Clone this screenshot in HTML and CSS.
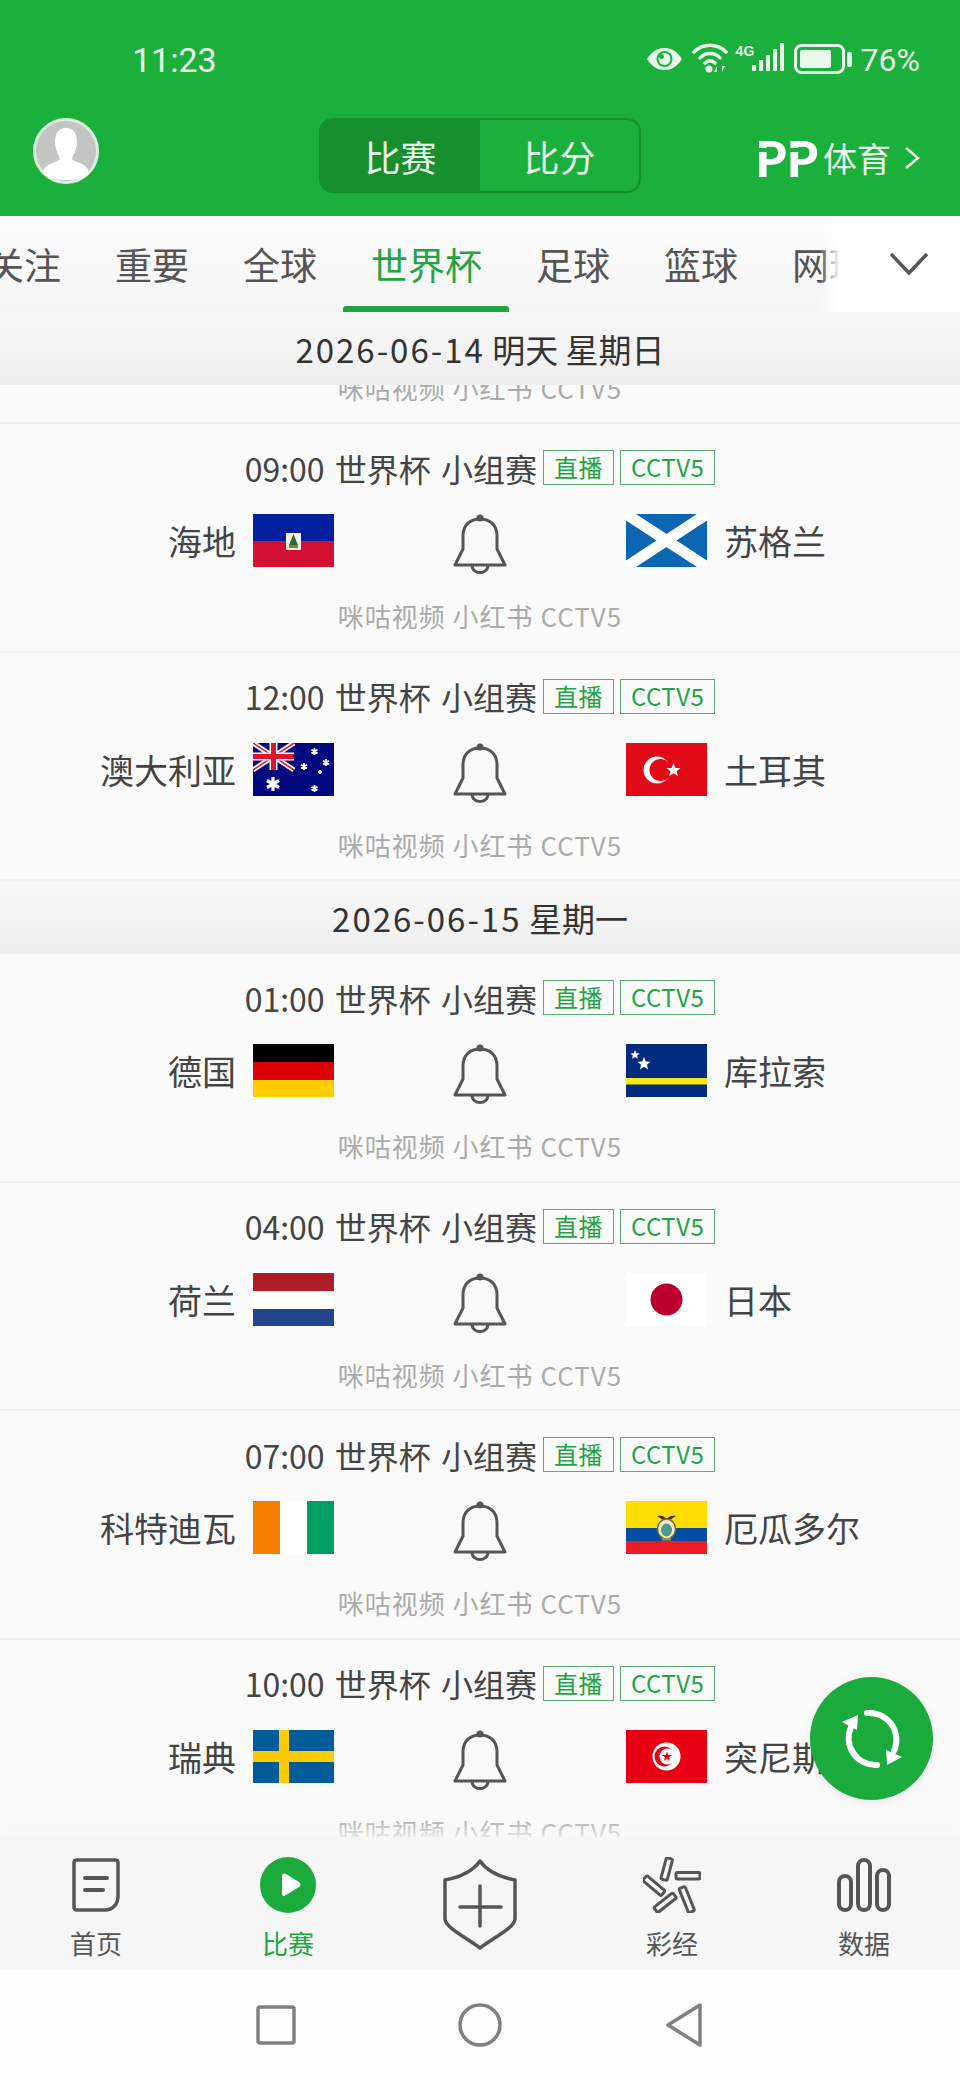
FILE: index.html
```html
<!DOCTYPE html>
<html>
	<head>
		<title>PP体育 比赛</title>
		<link rel="stylesheet" href="styles.css">
	</head>
	<body>
		<!-- shared flags and bell -->
		<svg class="defs" width="0" height="0">
			<symbol id="bell" viewBox="0 0 54 60">
				<circle cx="27" cy="4" r="3.5" fill="#555"/>
				<path d="M2 51 L10 35 V22 C10 11 17 5 27 5 C37 5 44 11 44 22 V35 L52 51 Z" fill="none" stroke="#555" stroke-width="3" stroke-linejoin="round"/>
				<path d="M19 51 C19 61 35 61 35 51" fill="none" stroke="#555" stroke-width="3"/>
			</symbol>
			<symbol id="haiti" viewBox="0 0 81 53" preserveAspectRatio="none">
				<rect width="81" height="27" fill="#00209f"/>
				<rect y="27" width="81" height="26" fill="#d21034"/>
				<rect x="33" y="19" width="15" height="17" fill="#f4f1e8"/>
				<path d="M40.500 20 L45 31 H36 Z" fill="#2f6b3a"/>
				<rect x="36" y="31" width="9" height="3" fill="#a8742a"/>
			</symbol>
			<symbol id="scotland" viewBox="0 0 81 53" preserveAspectRatio="none">
				<rect width="81" height="53" fill="#0b66b4"/>
				<path d="M0 0 L81 53 M81 0 L0 53" stroke="#fff" stroke-width="11"/>
			</symbol>
			<symbol id="australia" viewBox="0 0 81 53" preserveAspectRatio="none">
				<rect width="81" height="53" fill="#00087e"/>
				<path d="M0 0 L41 27 M41 0 L0 27" stroke="#fff" stroke-width="5"/>
				<path d="M0 0 L41 27 M41 0 L0 27" stroke="#e01a2b" stroke-width="1.600"/>
				<path d="M20.500 0 V27 M0 13.500 H41" stroke="#fff" stroke-width="8"/>
				<path d="M20.500 0 V27 M0 13.500 H41" stroke="#e8112d" stroke-width="5"/>
				<g stroke="#fff" fill="none">
					<path d="M20 34 V48 M14 37.500 L26 44.500 M26 37.500 L14 44.500" stroke-width="3.200"/>
					<path d="M61.500 5 V12 M58.500 6.700 L64.500 10.300 M64.500 6.700 L58.500 10.300" stroke-width="1.800"/>
					<path d="M73 16 V23 M70 17.700 L76 21.300 M76 17.700 L70 21.300" stroke-width="1.800"/>
					<path d="M51 20 V27 M48 21.700 L54 25.300 M54 21.700 L48 25.300" stroke-width="1.800"/>
					<path d="M67 27 V31 M65 29 H69" stroke-width="1.400"/>
					<path d="M61.500 42 V49 M58.500 43.700 L64.500 47.300 M64.500 43.700 L58.500 47.300" stroke-width="1.800"/>
				</g>
			</symbol>
			<symbol id="turkey" viewBox="0 0 81 53" preserveAspectRatio="none">
				<rect width="81" height="53" fill="#e30a17"/>
				<circle cx="31" cy="27" r="13.500" fill="#fff"/>
				<circle cx="34.500" cy="27" r="11" fill="#e30a17"/>
				<polygon points="46,20 47.900,24.900 53,25 49,28.200 50.400,33.100 46,30.300 41.600,33.100 43,28.200 39,25 44.100,24.900" fill="#fff" transform="translate(1.500 0)"/>
			</symbol>
			<symbol id="germany" viewBox="0 0 81 53" preserveAspectRatio="none">
				<rect width="81" height="18" fill="#000"/>
				<rect y="18" width="81" height="18" fill="#dd0000"/>
				<rect y="36" width="81" height="17" fill="#ffce00"/>
			</symbol>
			<symbol id="curacao" viewBox="0 0 81 53" preserveAspectRatio="none">
				<rect width="81" height="53" fill="#002b7f"/>
				<rect y="34" width="81" height="6.500" fill="#f9e814"/>
				<polygon points="9,6 10.300,9.200 13.700,9.400 11.100,11.500 12,14.800 9,13 6,14.800 6.900,11.500 4.300,9.400 7.700,9.200" fill="#fff"/>
				<polygon points="18,13 19.800,17.500 24.600,17.800 20.900,20.800 22.100,25.400 18,22.800 13.900,25.400 15.100,20.800 11.400,17.800 16.200,17.500" fill="#fff"/>
			</symbol>
			<symbol id="netherlands" viewBox="0 0 81 53" preserveAspectRatio="none">
				<rect width="81" height="18" fill="#ae1c28"/>
				<rect y="18" width="81" height="18" fill="#fff"/>
				<rect y="36" width="81" height="17" fill="#21468b"/>
			</symbol>
			<symbol id="japan" viewBox="0 0 81 53" preserveAspectRatio="none">
				<rect width="81" height="53" fill="#fff"/>
				<circle cx="40.500" cy="26.500" r="16" fill="#bc002d"/>
			</symbol>
			<symbol id="ivory" viewBox="0 0 81 53" preserveAspectRatio="none">
				<rect width="27" height="53" fill="#f77f00"/>
				<rect x="27" width="27" height="53" fill="#fff"/>
				<rect x="54" width="27" height="53" fill="#009e60"/>
			</symbol>
			<symbol id="ecuador" viewBox="0 0 81 53" preserveAspectRatio="none">
				<rect width="81" height="27" fill="#ffdd00"/>
				<rect y="27" width="81" height="13" fill="#034ea2"/>
				<rect y="40" width="81" height="13" fill="#ed1c24"/>
				<path d="M31 15 C35 14 38 15 40.500 18 C43 15 46 14 50 15 C47 17 45 18 43 19 H38 C36 18 34 17 31 15 Z" fill="#3a2a1c"/>
				<ellipse cx="40.500" cy="28" rx="9" ry="10" fill="#f3e9c8" stroke="#7a6a3a" stroke-width="1.500"/>
				<ellipse cx="40.500" cy="29" rx="5.500" ry="6.500" fill="#4c9a8a"/>
				<rect x="36" y="37" width="9" height="2.500" fill="#a88c3a"/>
			</symbol>
			<symbol id="sweden" viewBox="0 0 81 53" preserveAspectRatio="none">
				<rect width="81" height="53" fill="#005b99"/>
				<rect x="26" width="10" height="53" fill="#fecc00"/>
				<rect y="21" width="81" height="11" fill="#fecc00"/>
			</symbol>
			<symbol id="tunisia" viewBox="0 0 81 53" preserveAspectRatio="none">
				<rect width="81" height="53" fill="#e70013"/>
				<circle cx="40.500" cy="26.500" r="14" fill="#fff"/>
				<circle cx="38.500" cy="26.500" r="10" fill="#e70013"/>
				<circle cx="41.500" cy="26.500" r="8" fill="#fff"/>
				<polygon points="41,21.500 42.300,25 46,25.100 43.100,27.300 44.100,30.800 41,28.800 37.900,30.800 38.900,27.300 36,25.100 39.700,25" fill="#e70013"/>
			</symbol>
		</svg>

		<div class="page">
			<header class="header">
				<div class="status">
					<span class="clock">11:23</span>
					<div class="status-icons">
						<svg class="ic-eye" viewBox="0 0 37 24">
							<path d="M1 12 C6 4 12 1 18.500 1 C25 1 31 4 36 12 C31 20 25 23 18.500 23 C12 23 6 20 1 12 Z" fill="#e8f8ea"/>
							<circle cx="18.500" cy="12" r="8" fill="#1bb03c"/>
							<circle cx="18.500" cy="12" r="6" fill="#e8f8ea"/>
							<circle cx="15.500" cy="9.500" r="2.500" fill="#1bb03c"/>
						</svg>
						<svg class="ic-wifi" viewBox="0 0 36 30">
							<g fill="none" stroke="#e8f8ea" stroke-width="3.500" stroke-linecap="round">
								<path d="M2 9 C11 0 25 0 34 9"/>
								<path d="M8 15 C13 9 23 9 28 15"/>
								<path d="M13 20 C16 17 20 17 23 20"/>
							</g>
							<circle cx="17" cy="26" r="3.500" fill="#e8f8ea"/>
							<path d="M25 23 V29 L22 29 Z M30 23 V29 L33 23 Z" fill="#e8f8ea"/>
						</svg>
						<div class="cell">
							<span class="cell-type">4G</span>
							<svg class="ic-signal" viewBox="0 0 32 28">
								<rect x="0" y="22" width="4" height="6" fill="#e8f8ea"/>
								<rect x="7" y="17" width="4" height="11" fill="#e8f8ea"/>
								<rect x="14" y="12" width="4" height="16" fill="#e8f8ea"/>
								<rect x="21" y="6" width="4" height="22" fill="#e8f8ea"/>
								<rect x="28" y="0" width="4" height="28" fill="#e8f8ea"/>
							</svg>
						</div>
						<svg class="ic-battery" viewBox="0 0 58 30">
							<rect x="1.500" y="1.500" width="48" height="27" rx="6" fill="none" stroke="#e8f8ea" stroke-width="3"/>
							<rect x="6" y="6" width="31" height="18" rx="2" fill="#e8f8ea"/>
							<rect x="53" y="8" width="5" height="15" rx="2" fill="#e8f8ea"/>
						</svg>
						<span class="percent">76%</span>
					</div>
				</div>
				<div class="topbar">
					<svg class="avatar" viewBox="0 0 66 66">
						<circle cx="33" cy="33" r="31.500" fill="#c4c4c4" stroke="#d6f3dc" stroke-width="3"/>
						<path d="M33 10 C41 10 44 16 44 24 C44 32 40 37 39 41 C42 45 56 45 56 56 C50 61 42 62 33 62 C24 62 16 61 10 56 C10 45 24 45 27 41 C26 37 22 32 22 24 C22 16 25 10 33 10 Z" fill="#fff"/>
					</svg>
					<div class="switch">
						<span class="switch-item active">比赛</span>
						<span class="switch-item">比分</span>
					</div>
					<div class="brand">
						<span class="brand-pp"><b class="brand-p">P</b><b class="brand-p">P</b></span>
						<span class="brand-cn">体育</span>
						<svg class="brand-arrow" viewBox="0 0 16 24"><path d="M2 2 L14 12 L2 22" fill="none" stroke="#e8f8ea" stroke-width="2.500"/></svg>
					</div>
				</div>
			</header>

			<nav class="tabs">
				<div class="tab-list">
					<span class="tab">关注</span>
					<span class="tab">重要</span>
					<span class="tab">全球</span>
					<span class="tab active">世界杯</span>
					<span class="tab">足球</span>
					<span class="tab">篮球</span>
					<span class="tab">网球</span>
				</div>
				<div class="tab-more">
					<svg viewBox="0 0 38 22"><path d="M1 1 L19 20 L37 1" fill="none" stroke="#555" stroke-width="3.500"/></svg>
				</div>
			</nav>

			<main class="list">
				<div class="date"><span class="date-num">2026-06-14</span> 明天 星期日</div>
				<div class="row-cut"><div class="sources">咪咕视频 小红书 CCTV5</div></div>

				<section class="match">
					<div class="meta"><span>09:00 世界杯 小组赛</span><span class="tag">直播</span><span class="tag">CCTV5</span></div>
					<div class="teams">
						<span class="team home">海地</span>
						<svg class="flag"><use href="#haiti"/></svg>
						<div class="bell"><svg><use href="#bell"/></svg></div>
						<svg class="flag"><use href="#scotland"/></svg>
						<span class="team away">苏格兰</span>
					</div>
					<div class="sources">咪咕视频 小红书 CCTV5</div>
				</section>

				<section class="match">
					<div class="meta"><span>12:00 世界杯 小组赛</span><span class="tag">直播</span><span class="tag">CCTV5</span></div>
					<div class="teams">
						<span class="team home">澳大利亚</span>
						<svg class="flag"><use href="#australia"/></svg>
						<div class="bell"><svg><use href="#bell"/></svg></div>
						<svg class="flag"><use href="#turkey"/></svg>
						<span class="team away">土耳其</span>
					</div>
					<div class="sources">咪咕视频 小红书 CCTV5</div>
				</section>

				<div class="date"><span class="date-num">2026-06-15</span> 星期一</div>

				<section class="match">
					<div class="meta"><span>01:00 世界杯 小组赛</span><span class="tag">直播</span><span class="tag">CCTV5</span></div>
					<div class="teams">
						<span class="team home">德国</span>
						<svg class="flag"><use href="#germany"/></svg>
						<div class="bell"><svg><use href="#bell"/></svg></div>
						<svg class="flag"><use href="#curacao"/></svg>
						<span class="team away">库拉索</span>
					</div>
					<div class="sources">咪咕视频 小红书 CCTV5</div>
				</section>

				<section class="match">
					<div class="meta"><span>04:00 世界杯 小组赛</span><span class="tag">直播</span><span class="tag">CCTV5</span></div>
					<div class="teams">
						<span class="team home">荷兰</span>
						<svg class="flag"><use href="#netherlands"/></svg>
						<div class="bell"><svg><use href="#bell"/></svg></div>
						<svg class="flag"><use href="#japan"/></svg>
						<span class="team away">日本</span>
					</div>
					<div class="sources">咪咕视频 小红书 CCTV5</div>
				</section>

				<section class="match">
					<div class="meta"><span>07:00 世界杯 小组赛</span><span class="tag">直播</span><span class="tag">CCTV5</span></div>
					<div class="teams">
						<span class="team home">科特迪瓦</span>
						<svg class="flag"><use href="#ivory"/></svg>
						<div class="bell"><svg><use href="#bell"/></svg></div>
						<svg class="flag"><use href="#ecuador"/></svg>
						<span class="team away">厄瓜多尔</span>
					</div>
					<div class="sources">咪咕视频 小红书 CCTV5</div>
				</section>

				<section class="match">
					<div class="meta"><span>10:00 世界杯 小组赛</span><span class="tag">直播</span><span class="tag">CCTV5</span></div>
					<div class="teams">
						<span class="team home">瑞典</span>
						<svg class="flag"><use href="#sweden"/></svg>
						<div class="bell"><svg><use href="#bell"/></svg></div>
						<svg class="flag"><use href="#tunisia"/></svg>
						<span class="team away">突尼斯</span>
					</div>
					<div class="sources">咪咕视频 小红书 CCTV5</div>
				</section>
			</main>

			<button class="refresh">
				<svg viewBox="0 0 123 123">
					<g fill="none" stroke="#fff" stroke-width="6" stroke-linecap="round">
						<path d="M57 36 A27 27 0 0 1 84 74"/>
						<path d="M67 88 A27 27 0 0 1 41 50"/>
					</g>
					<polygon points="76,73 92,80 77,88" fill="#fff"/>
					<polygon points="32,45 48,38 47,53" fill="#fff"/>
				</svg>
			</button>

			<footer class="bottom">
				<div class="bottom-item">
					<svg class="bottom-icon" viewBox="0 0 48 54" width="48" height="54">
						<path d="M5 2 H43 C45 2 46 3 46 5 V38 C46 46 41 52 33 52 H5 C3 52 2 51 2 49 V5 C2 3 3 2 5 2 Z" fill="none" stroke="#555" stroke-width="3.500"/>
						<path d="M13 20 H35 M13 32 H31" stroke="#555" stroke-width="4" stroke-linecap="round"/>
					</svg>
					<span class="bottom-label">首页</span>
				</div>
				<div class="bottom-item active">
					<svg class="bottom-icon" viewBox="0 0 56 56" width="56" height="56">
						<circle cx="28" cy="28" r="28" fill="#1bab3c"/>
						<path d="M22 19 C22 17 24 16 26 17 L39 25 C41 27 41 29 39 30 L26 38 C24 40 22 39 22 37 Z" fill="#fff"/>
					</svg>
					<span class="bottom-label">比赛</span>
				</div>
				<div class="bottom-item">
					<svg class="bottom-shield" viewBox="0 0 74 91" width="74" height="91">
						<path d="M37 2 C44 12 56 18 72 21 V60 C72 68 52 78 37 89 C22 78 2 68 2 60 V21 C18 18 30 12 37 2 Z" fill="none" stroke="#555" stroke-width="3.500" stroke-linejoin="round"/>
						<path d="M17 48 H58 M37 27 V67" stroke="#555" stroke-width="3.500" stroke-linecap="round"/>
					</svg>
				</div>
				<div class="bottom-item">
					<svg class="bottom-icon" viewBox="0 0 58 55" width="58" height="55">
						<g fill="none" stroke="#555" stroke-width="3" stroke-linejoin="round">
							<rect x="-11" y="-3" width="22" height="6.500" rx="1.500" transform="translate(23.500 11.500) rotate(-75)"/>
							<rect x="-12" y="-3" width="24" height="6.500" rx="1.500" transform="translate(45 18)"/>
							<rect x="-12" y="-3" width="24" height="6.500" rx="1.500" transform="translate(11 28) rotate(40)"/>
							<rect x="-12" y="-3" width="24" height="6.500" rx="1.500" transform="translate(22 45) rotate(-38)"/>
							<rect x="-13" y="-3" width="26" height="6.500" rx="1.500" transform="translate(44 42) rotate(68)"/>
						</g>
					</svg>
					<span class="bottom-label">彩经</span>
				</div>
				<div class="bottom-item">
					<svg class="bottom-icon" viewBox="0 0 54 54" width="54" height="54">
						<g fill="none" stroke="#555" stroke-width="4">
							<rect x="2" y="18" width="12" height="34" rx="6"/>
							<rect x="21" y="2" width="12" height="50" rx="6"/>
							<rect x="40" y="12" width="12" height="40" rx="6"/>
						</g>
					</svg>
					<span class="bottom-label">数据</span>
				</div>
			</footer>

			<div class="sysbar">
				<svg viewBox="0 0 40 40" width="40" height="40"><rect x="2" y="2" width="36" height="36" rx="2" fill="none" stroke="#808080" stroke-width="3.500"/></svg>
				<svg viewBox="0 0 44 44" width="44" height="44"><circle cx="22" cy="22" r="20" fill="none" stroke="#808080" stroke-width="3.500"/></svg>
				<svg viewBox="0 0 38 44" width="38" height="44"><path d="M35 2 V42 L3 22 Z" fill="none" stroke="#808080" stroke-width="3.500" stroke-linejoin="round"/></svg>
			</div>
		</div>
	</body>
</html>
```

FILE: styles.css
```css
* {
	box-sizing: border-box;
}

html,
body {
	margin: 0;
	padding: 0;
}

body {
	background-color: #fafafa;
	color: #444;
	font-family: "Noto Sans CJK SC", Roboto, sans-serif;
}

.defs {
	position: absolute;
}

.page {
	position: relative;
	display: flex;
	flex-direction: column;
	width: 960px;
	height: 2080px;
	overflow: hidden;
}

/* green top area */
.header {
	height: 216px;
	flex-shrink: 0;
	background-color: #1bb03c;
	color: #e8f8ea;
}

.status {
	display: flex;
	justify-content: space-between;
	height: 118px;
	padding: 40px 40px 0 132px;
}

.clock {
	font-family: Roboto, sans-serif;
	font-size: 34px;
	line-height: 40px;
}

.status-icons {
	display: flex;
	align-items: flex-start;
}

.ic-eye {
	width: 37px;
	height: 24px;
	margin: 7px 9px 0 0;
}

.ic-wifi {
	width: 36px;
	height: 30px;
	margin: 3px 8px 0 0;
}

.cell {
	display: flex;
	align-items: flex-start;
	margin: 3px 10px 0 0;
}

.cell-type {
	font-family: "Liberation Sans", sans-serif;
	font-size: 14px;
	font-weight: bold;
	line-height: 16px;
	width: 16px;
}

.ic-signal {
	width: 32px;
	height: 28px;
}

.ic-battery {
	width: 58px;
	height: 30px;
	margin: 4px 9px 0 0;
}

.percent {
	font-family: Roboto, sans-serif;
	font-size: 32px;
	line-height: 40px;
}

.topbar {
	display: grid;
	grid-template-columns: 286px 322px 1fr;
	align-items: start;
	padding: 0 40px 0 33px;
}

.avatar {
	width: 66px;
	height: 66px;
}

.switch {
	display: flex;
	height: 75px;
	border: 2px solid #159030;
	border-radius: 14px;
	overflow: hidden;
	font-size: 36px;
}

.switch-item {
	display: flex;
	flex: 1;
	align-items: center;
	justify-content: center;
}

.switch-item.active {
	background-color: #178f2e;
}

.brand {
	display: flex;
	align-items: center;
	justify-content: flex-end;
	height: 75px;
	margin-top: 2px;
}

.brand-pp {
	display: flex;
	font-family: Lato, sans-serif;
	font-size: 50px;
	line-height: 50px;
	margin-right: 5px;
	color: #fff;
}

.brand-p {
	position: relative;
	font-weight: 900;
}

.brand-p::before {
	content: "";
	position: absolute;
	left: 3px;
	top: 15px;
	width: 12px;
	height: 4px;
	background-color: #1bb03c;
}

.brand-cn {
	font-size: 34px;
	margin-right: 13px;
}

.brand-arrow {
	width: 16px;
	height: 24px;
}

/* tab strip */
.tabs {
	position: relative;
	height: 96px;
	flex-shrink: 0;
	background: linear-gradient(#fcfcfc, #f5f5f5);
	overflow: hidden;
}

.tab-list {
	display: flex;
	gap: 54px;
	height: 100%;
	margin-left: -13px;
}

.tab {
	position: relative;
	display: flex;
	align-items: center;
	flex-shrink: 0;
	font-size: 37px;
	color: #555;
}

.tab.active {
	color: #1fa544;
}

.tab.active::after {
	content: "";
	position: absolute;
	left: -28px;
	right: -27px;
	bottom: 0;
	height: 6px;
	border-radius: 3px 3px 0 0;
	background-color: #1fa544;
}

.tab-more {
	position: absolute;
	top: 0;
	right: 0;
	display: flex;
	align-items: center;
	justify-content: flex-end;
	width: 140px;
	height: 100%;
	padding-right: 32px;
	background: linear-gradient(90deg, rgba(255, 255, 255, 0), #fff 20px);
}

.tab-more svg {
	width: 38px;
	height: 22px;
}

/* match list */
.list {
	flex: 1;
	min-height: 0;
	overflow: hidden;
}

.date {
	display: flex;
	align-items: center;
	justify-content: center;
	height: 73px;
	padding-top: 1px;
	background: linear-gradient(#f7f7f7, #efefef);
	font-size: 33px;
	color: #333;
	white-space: pre;
}

.date-num {
	letter-spacing: 2px;
}

.row-cut {
	display: flex;
	flex-direction: column;
	justify-content: flex-end;
	height: 39px;
	padding-bottom: 16px;
	overflow: hidden;
	border-bottom: 2px solid #f1f1f1;
}

.match {
	height: 228.500px;
	padding-top: 26px;
	border-bottom: 2px solid #f1f1f1;
}

.meta {
	display: flex;
	align-items: center;
	justify-content: center;
	height: 35px;
	font-size: 32px;
	word-spacing: 3px;
	color: #444;
}

.tag {
	height: 35px;
	padding: 0 10px;
	margin-left: 6px;
	border: 1px solid #5eaa74;
	font-size: 24px;
	line-height: 32px;
	letter-spacing: 0.5px;
	color: #1fa544;
}

.teams {
	display: flex;
	align-items: flex-start;
	justify-content: center;
	height: 53px;
	margin-top: 29px;
}

.flag {
	width: 81px;
	height: 53px;
	flex-shrink: 0;
}

.bell {
	display: flex;
	justify-content: center;
	width: 292px;
}

.bell svg {
	width: 54px;
	height: 60px;
}

.team {
	flex: 1;
	font-size: 34px;
	line-height: 53px;
	color: #444;
}

.team.home {
	padding-right: 17px;
	text-align: right;
}

.team.away {
	padding-left: 17px;
}

.sources {
	margin-top: 31px;
	text-align: center;
	font-size: 26px;
	line-height: 36px;
	letter-spacing: 1px;
	color: #aaa;
}

.row-cut .sources {
	margin-top: 0;
}

/* floating refresh, lies over the list */
.refresh {
	position: absolute;
	left: 810px;
	top: 1677px;
	width: 123px;
	height: 123px;
	padding: 0;
	border: none;
	border-radius: 50%;
	background-color: #1bab3c;
	box-shadow: 0 2px 10px rgba(0, 0, 0, 0.08);
}

.refresh svg {
	display: block;
	width: 123px;
	height: 123px;
}

/* bottom navigation */
.bottom {
	display: grid;
	grid-template-columns: repeat(5, 192px);
	height: 133px;
	flex-shrink: 0;
	background-color: #f6f6f6;
	box-shadow: 0 -8px 14px rgba(246, 246, 246, 0.9);
}

.bottom-item {
	display: flex;
	flex-direction: column;
	align-items: center;
	padding-top: 20px;
}

.bottom-icon {
	display: block;
	height: 56px;
}

.bottom-shield {
	display: block;
	margin-top: 2px;
}

.bottom-label {
	margin-top: 12px;
	font-size: 26px;
	line-height: 36px;
	color: #555;
}

.bottom-item.active .bottom-label {
	color: #1fa544;
}

.sysbar {
	display: grid;
	grid-template-columns: 252px 1fr 252px;
	justify-items: center;
	align-items: center;
	height: 110px;
	padding: 0 150px;
	background-color: #fdfdfd;
}
```
